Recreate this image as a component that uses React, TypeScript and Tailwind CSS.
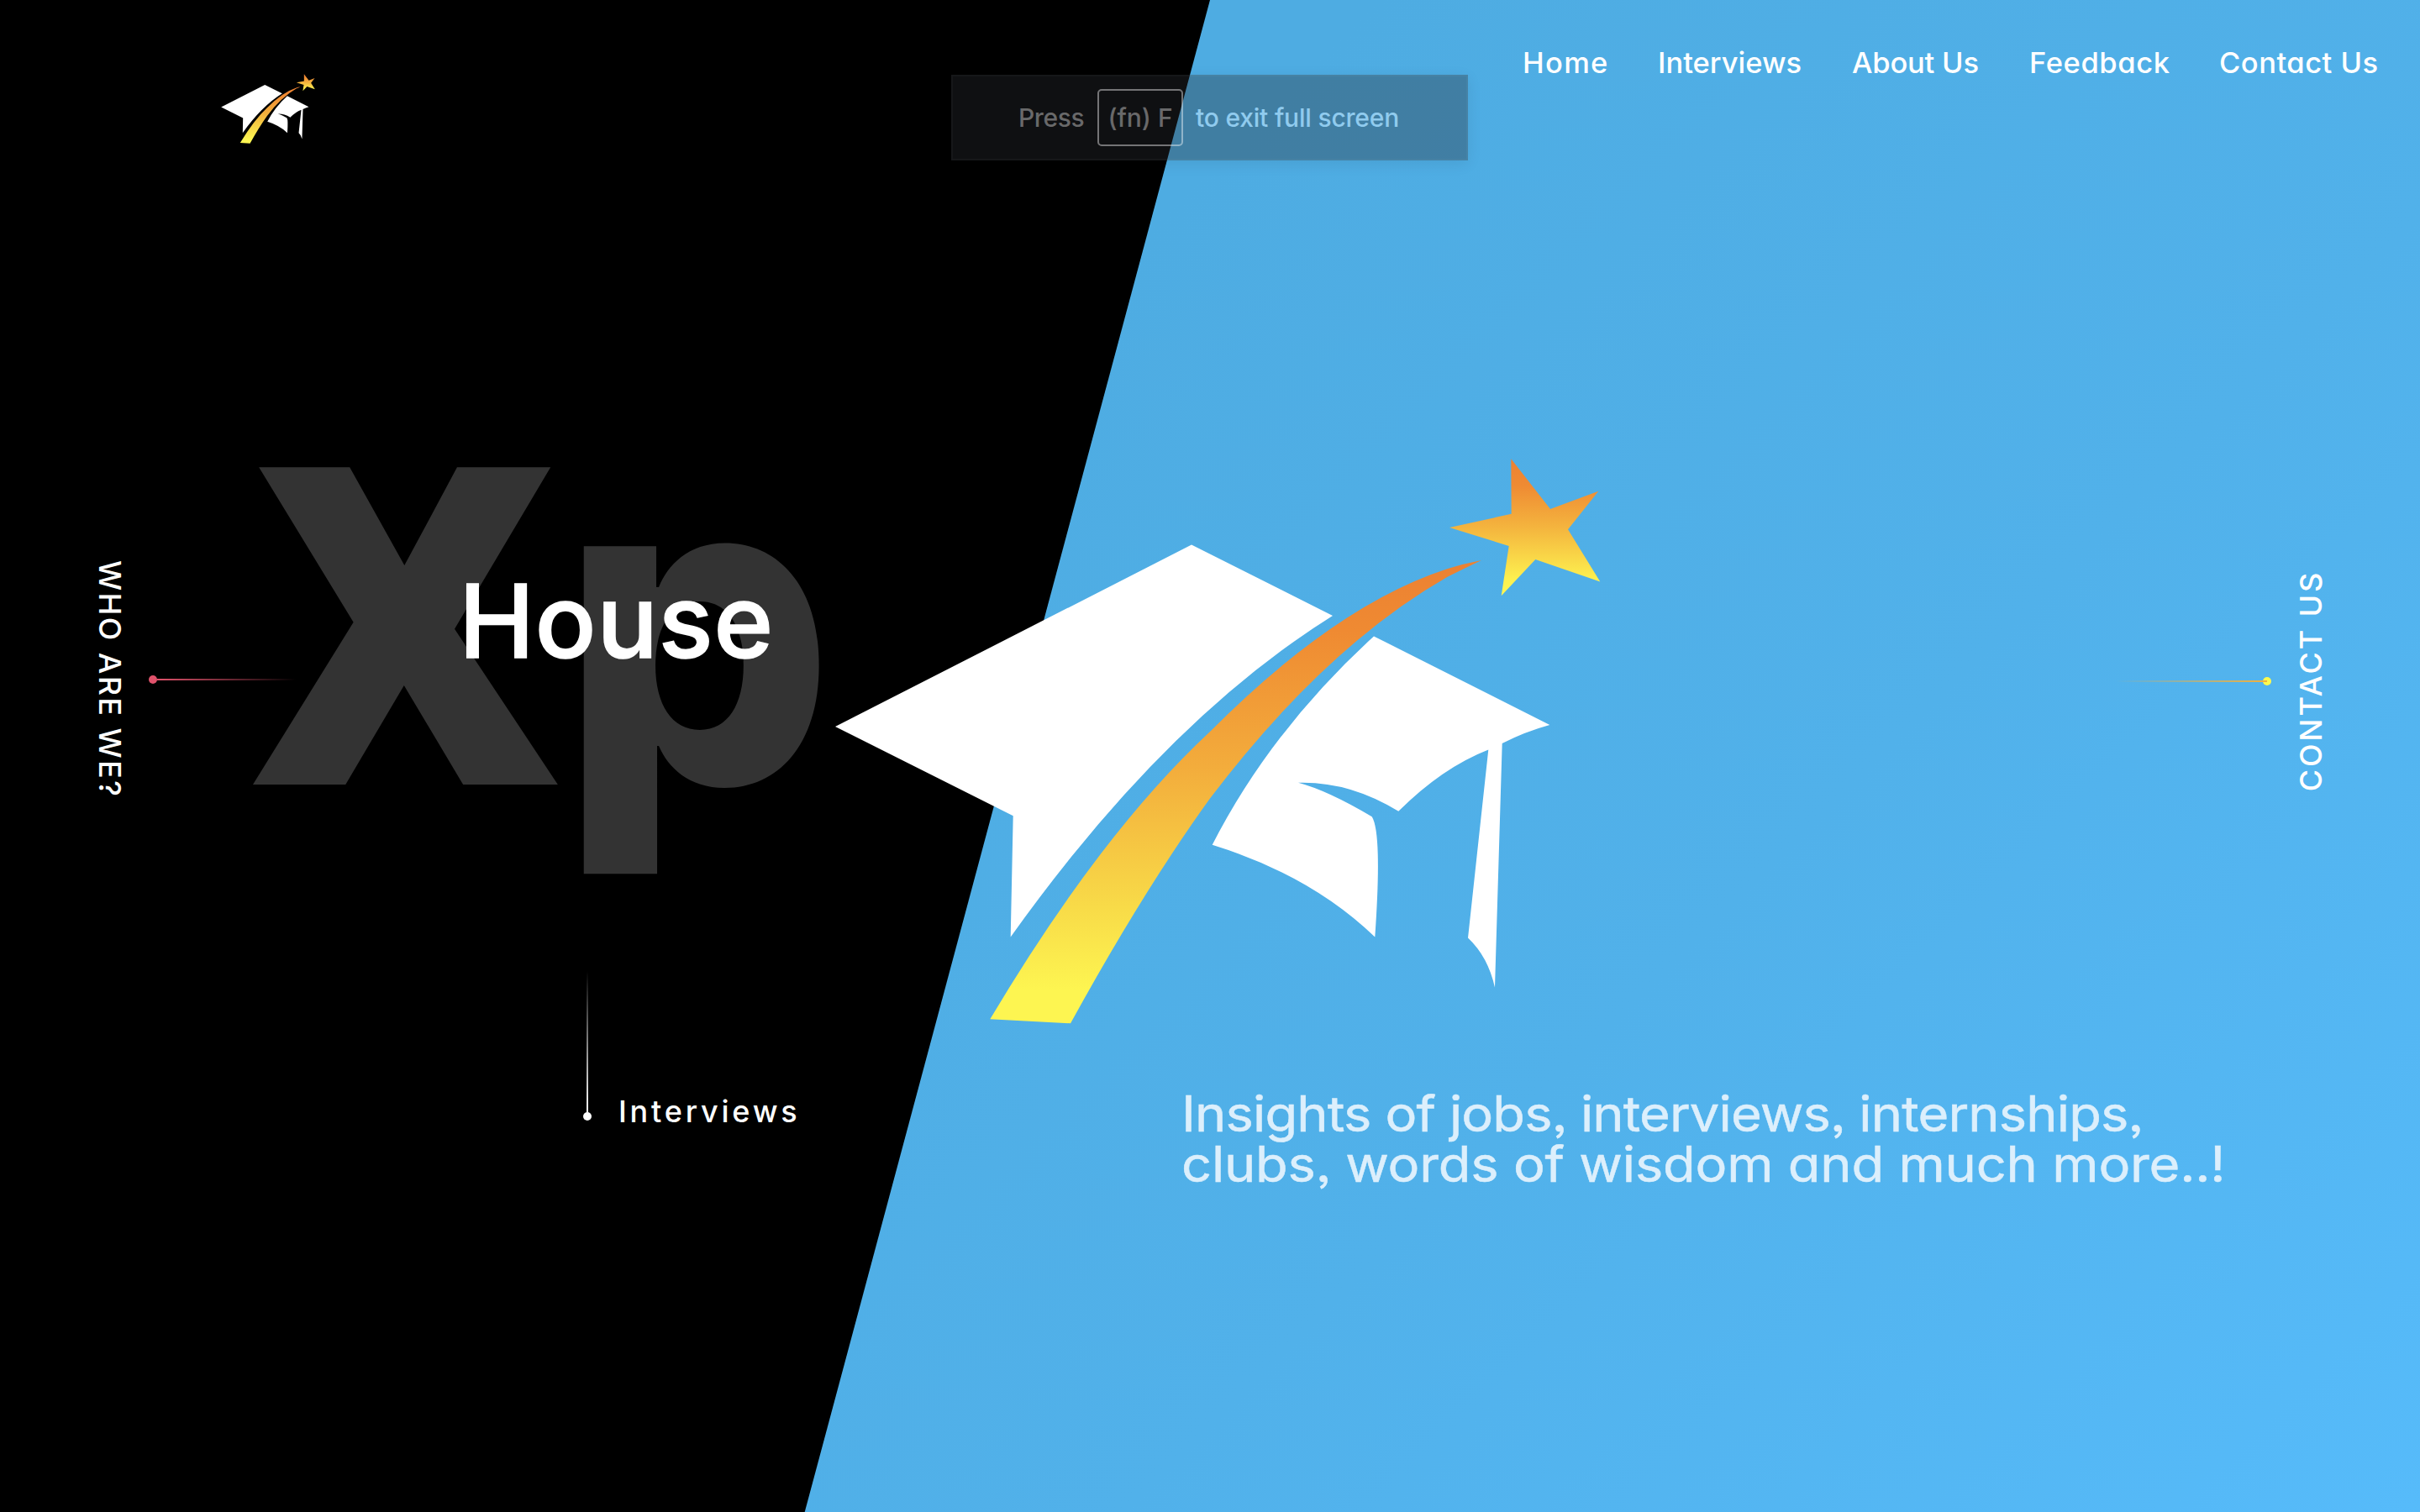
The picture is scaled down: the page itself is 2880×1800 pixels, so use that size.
const navLinks = [
  { label: 'Home', box: 'w-[161px] tracking-[1.3px]' },
  { label: 'Interviews', box: 'w-[231px] tracking-[0px]' },
  { label: 'About Us', box: 'w-[211px] tracking-[-0.2px]' },
  { label: 'Feedback', box: 'w-[226px] tracking-[0.6px]' },
  { label: 'Contact Us', box: 'w-[239px] tracking-[0.5px]' },
];

function GraduationCap({ id, className }: { id: string; className: string }) {
  return (
    <svg viewBox="984 536 930 700" className={className} aria-hidden="true">
      <defs>
        <linearGradient id={`${id}-trail`} gradientUnits="userSpaceOnUse" x1="0" y1="668" x2="0" y2="1218">
          <stop offset="0" stopColor="#ec8132" />
          <stop offset="0.15" stopColor="#ef8a32" />
          <stop offset="0.45" stopColor="#f3ad3c" />
          <stop offset="0.75" stopColor="#f8db48" />
          <stop offset="0.93" stopColor="#fdf551" />
          <stop offset="1" stopColor="#fdf551" />
        </linearGradient>
        <linearGradient id={`${id}-star`} gradientUnits="userSpaceOnUse" x1="0" y1="546" x2="0" y2="709">
          <stop offset="0" stopColor="#ed8132" />
          <stop offset="0.2" stopColor="#ef8b33" />
          <stop offset="0.5" stopColor="#f4b43e" />
          <stop offset="0.88" stopColor="#fdf04f" />
          <stop offset="1" stopColor="#fdf753" />
        </linearGradient>
      </defs>
      <g fill="#fff">
        <path d="M994 865 L1418 648.6 L1586 733 Q1386 858.4 1202.7 1115.5 L1205.7 971.3 Z" />
        <path d="M1635 757.4 L1844.3 863 Q1815 871 1787.7 885 L1779 1175.6 Q1771 1139 1747 1116.4 L1771.3 892.4 Q1716 914 1664.3 965.8 Q1606 930 1545 931.8 Q1580 941 1632.7 972.3 Q1645 992 1636.3 1115.5 Q1560 1042 1442.7 1005.8 Q1512 870 1635 757.4 Z" />
      </g>
      <path
        fill={`url(#${id}-trail)`}
        d="M1763 667 Q1742 671 1723 677 Q1590 720 1440 871 Q1310 991.9 1178.3 1213.3 L1274 1218.3 Q1361 1060 1440 950.5 Q1577 770 1723 686.5 Q1744 676 1763 667 Z"
      />
      <path
        fill={`url(#${id}-star)`}
        d="M1798.3 546.2 L1845 605.9 L1902.3 584.7 L1866 630.2 L1904.3 692.6 L1827.3 666 L1786.7 709.2 L1795.7 649.9 L1725 627.9 L1798.7 611.8 Z"
      />
    </svg>
  );
}

export default function App() {
  return (
    <div className="relative isolate h-[1800px] w-[2880px] overflow-hidden bg-black font-['Inter',sans-serif] text-white [font-feature-settings:'cv11','ss03']">
      <div className="absolute inset-0 -z-10 bg-[linear-gradient(135deg,#4eace2_35%,#51b1ea_67%,#56bbfa_100%)] [clip-path:polygon(1440px_0,100%_0,100%_100%,957.7px_100%)]" />

      <header className="flex h-[192px] items-start justify-between">
        <GraduationCap id="brand" className="mt-[87px] ml-[262px] h-[86px] w-[114px]" />
        <nav className="mt-[50px] flex text-[34.5px] leading-[50px] font-medium whitespace-nowrap">
          {navLinks.map((link) => (
            <a key={link.label} href="#" className={link.box}>
              {link.label}
            </a>
          ))}
        </nav>
      </header>

      <div className="absolute top-[89px] left-[1132px] flex h-[102px] w-[615px] items-center border-2 border-white/3 bg-[#2a2c32]/36 pl-[78px] text-[30px] leading-[40px] font-medium whitespace-nowrap shadow-[0_4px_16px_rgba(0,0,0,0.08)] [font-feature-settings:normal]">
        <span className="w-[94px] tracking-[-0.4px] text-white/38">Press</span>
        <span className="flex h-[68px] w-[102px] items-center justify-center rounded-[5px] border-2 border-white/42 text-white/38">(fn) F</span>
        <span className="ml-[15px] tracking-[-0.2px] text-[#90cbee]">to exit full screen</span>
      </div>

      <main className="flex h-[1048px] items-start">
        <a href="#" className="mt-[475px] ml-[108px] w-[45px] text-[36px] leading-[45px] font-medium tracking-[2.4px] whitespace-nowrap [writing-mode:vertical-rl]">
          WHO ARE WE?
        </a>
        <div className="mt-[612px] ml-[24px] flex w-[175px] items-center">
          <span className="size-[10px] rounded-full bg-[#e0526b]" />
          <span className="h-[2px] flex-1 bg-linear-to-r from-[#e0526b] to-transparent" />
        </div>
        <h1 className="relative mt-[293px] ml-[-62px] w-[694px] text-[520px] leading-[520px]">
          <span className="block font-extrabold whitespace-nowrap text-[#333333]">
            <span className="ml-[10px] inline-block w-[366px] origin-left scale-x-[0.955] font-['Open_Sans'] text-[529px] leading-[488px] font-extrabold">X</span>
            <span className="inline-block origin-left scale-x-[0.985]">p</span>
          </span>
          <span className="absolute top-[194px] left-[256px] text-[121px] leading-[121px] font-medium tracking-[0.5px] text-white [-webkit-text-stroke:1.5px_white]">
            House
          </span>
        </h1>
        <GraduationCap id="hero" className="mt-[344px] h-[700px] w-[930px]" />
        <div className="mt-[614px] ml-auto flex w-[185px] items-center">
          <span className="relative z-10 mr-[-5px] h-[2px] flex-1 bg-linear-to-l from-[#f2b03d] to-transparent" />
          <span className="size-[10px] rounded-full bg-[#fbfb4f]" />
        </div>
        <a href="#" className="mt-[487px] mr-[107px] ml-[25px] w-[45px] rotate-180 text-[36px] leading-[45px] font-medium tracking-[2.8px] whitespace-nowrap [writing-mode:vertical-rl]">
          CONTACT US
        </a>
      </main>

      <footer className="flex h-[560px] items-start">
        <div className="mt-[-84px] ml-[694px] flex h-[178px] w-[10px] flex-col items-center">
          <span className="w-[2px] flex-1 bg-linear-to-t from-white to-transparent" />
          <span className="size-[10px] rounded-full bg-white" />
        </div>
        <a href="#" className="mt-[61px] ml-[32px] w-[670px] text-[36px] leading-[45px] font-medium tracking-[3.8px]">
          Interviews
        </a>
        <p className="mt-[56px] origin-left scale-x-[1.08] text-[58.5px] leading-[60px] whitespace-nowrap text-[#dceffc] [-webkit-text-stroke:0.5px_#dceffc]">
          <span className="block tracking-[-0.8px]">Insights of jobs, interviews, internships,</span>
          <span className="block tracking-[-0.2px]">clubs, words of wisdom and much more..!</span>
        </p>
      </footer>
    </div>
  );
}
